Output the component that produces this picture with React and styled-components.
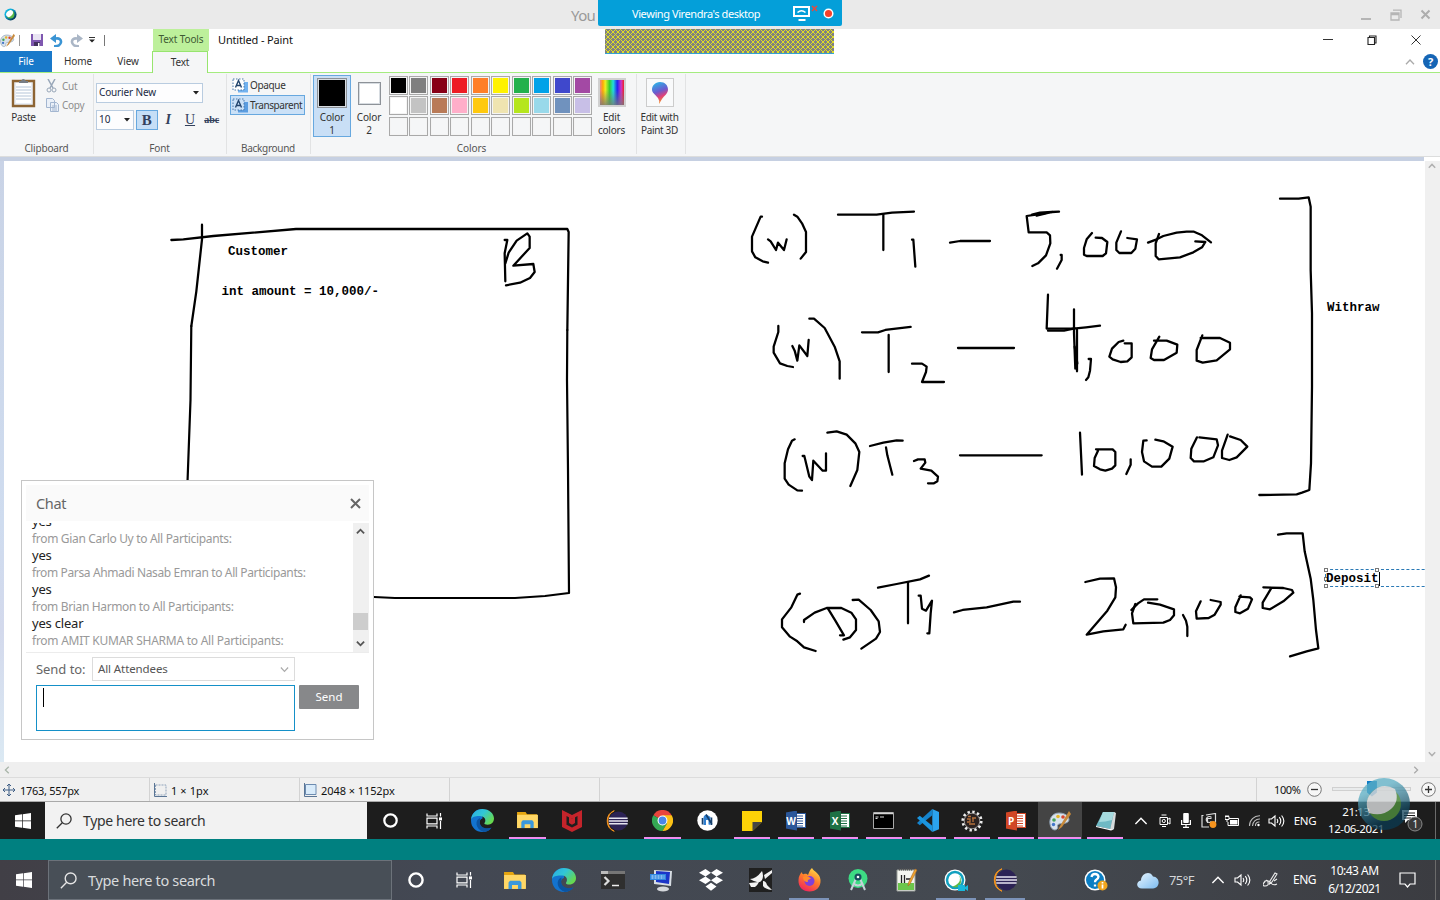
import React from 'react';
import styled, { createGlobalStyle, css } from 'styled-components';

const Global = createGlobalStyle`
  *{box-sizing:border-box}
  html,body{margin:0;padding:0;background:#fff;overflow:hidden}
  body{font-family:"Noto Sans","Open Sans",sans-serif;font-size:10px;color:#222}
  svg{display:block;flex:none}
`;

const T = styled.span`
  font-size:${p => p.$s || 10}px;
  letter-spacing:${p => p.$ls || 0}px;
  color:${p => p.$c || 'inherit'};
  line-height:${p => p.$lh || 13}px;
  white-space:pre;
  display:block;
`;
const Screen = styled.div`width:1440px;height:900px;display:flex;flex-direction:column;position:relative;overflow:hidden;`;

/* meeting window title bar */
const MeetingBar = styled.header`height:29px;flex:none;background:#eaeaea;display:flex;align-items:center;padding:0 9px 0 4px;`;
const MeetingTitle = styled.div`margin-left:554px;flex:1;`;
const MeetingButtons = styled.div`display:flex;gap:18px;align-items:center;`;
const SharePill = styled.div`position:absolute;left:598px;top:0;width:244px;height:26px;background:#049fd9;border-radius:0 0 2px 2px;display:flex;align-items:center;padding-left:34px;color:#fff;`;
const ShareIcons = styled.div`display:flex;align-items:center;gap:5px;margin-left:auto;padding-right:8px;`;
const Hatch = styled.div`position:absolute;left:605px;top:29px;width:229px;height:25px;background:#808080;border-bottom:1px solid #35a3cf;`;

/* paint chrome */
const TitleRow = styled.div`height:22px;flex:none;display:flex;align-items:center;background:#fff;`;
const QuickTools = styled.div`width:153px;display:flex;align-items:center;`;
const ToolsTab = styled.div`width:56px;height:22px;background:#bdf09b;display:flex;justify-content:center;align-items:center;padding-bottom:2px;`;
const DocTitle = styled.div`padding-left:9px;flex:1;`;
const WinButtons = styled.div`display:flex;align-items:center;gap:34px;padding-right:19px;`;
const TabRow = styled.div`height:22px;flex:none;display:flex;background:#fff;border-bottom:1px solid #a5ec80;position:relative;`;
const Tab = styled.div`width:${p => p.$w}px;height:21px;display:flex;align-items:center;justify-content:center;color:#333;
  ${p => p.$file && css`background:#1979ca;color:#fff;`}
  ${p => p.$on && css`background:#f5f6f7;border:1px solid #97e56e;border-bottom:0;height:22px;padding-bottom:1px;`}`;
const TabEnd = styled.div`flex:1;display:flex;justify-content:flex-end;align-items:center;gap:8px;padding-right:2px;`;
const Ribbon = styled.div`height:84px;flex:none;background:#f5f6f7;border-bottom:1px solid #dcdddd;display:flex;padding-top:1px;color:#333;`;
const Group = styled.section`width:${p => p.$w}px;height:80px;border-right:1px solid #e2e3e4;display:flex;flex-direction:column;`;
const GroupBody = styled.div`height:68px;flex:none;display:flex;padding:${p => p.$p || '0'};gap:${p => p.$gap || 0}px;${p => p.$col && 'flex-direction:column;'}`;
const GroupName = styled.div`display:flex;justify-content:center;color:#555;padding-right:${p => p.$pr ?? 1}px;`;
const Stack = styled.div`display:flex;flex-direction:column;align-items:${p => p.$left ? 'flex-start' : 'center'};gap:${p => p.$gap || 0}px;width:${p => p.$w ? p.$w + 'px' : 'auto'};padding-top:${p => p.$pt || 0}px;`;
const Line = styled.div`display:flex;align-items:center;gap:${p => p.$gap || 0}px;`;
const Combo = styled.div`width:${p => p.$w}px;height:20px;background:#fdfdfe;border:1px solid #b9cce0;display:flex;align-items:center;justify-content:space-between;padding:0 3px 1px 2px;color:#222a44;`;
const StyleBtn = styled.div`width:${p => p.$w || 21.5}px;height:20px;display:flex;align-items:center;justify-content:center;font:${p => p.$f};color:#33415c;
  border:1px solid ${p => p.$on ? '#67a8df' : 'transparent'};background:${p => p.$on ? '#c5def6' : 'none'};text-decoration:${p => p.$d || 'none'};text-decoration-thickness:1px;`;
const ModeBtn = styled.div`width:75px;height:20px;display:flex;align-items:center;gap:2px;padding-left:1px;border:1px solid ${p => p.$on ? '#67a8df' : 'transparent'};background:${p => p.$on ? '#cbe1f7' : 'none'};`;
const ColorBtn = styled.div`width:${p => p.$w}px;height:62px;display:flex;flex-direction:column;align-items:center;padding-top:2px;border:1px solid ${p => p.$on ? '#67a8df' : 'transparent'};background:${p => p.$on ? '#c9dff6' : 'none'};`;
const BigSwatch = styled.div`width:${p => p.$n}px;height:${p => p.$n}px;flex:none;margin:${p => p.$m}px 0 ${p => p.$m + 3}px;background:${p => p.$bg};border:1px solid #8d9298;box-shadow:inset 0 0 0 1px #d7dce1;`;
const Palette = styled.div`display:grid;grid-template-columns:repeat(10,19px);grid-auto-rows:19px;column-gap:1.44px;row-gap:1.3px;width:205px;`;
const Swatch = styled.div`background:${p => p.$c};border:1px solid #a9a9a9;box-shadow:inset 0 0 0 1px #f4f4f4;`;
const HelpDot = styled.div`width:15px;height:15px;border-radius:50%;background:#1565b5;color:#fff;font:bold 11px/15px "Open Sans",sans-serif;text-align:center;`;
const Spectrum = styled.div`width:28px;height:29px;flex:none;margin-bottom:4px;border:2px solid #d0d0d0;background:linear-gradient(transparent 40%,#777c),linear-gradient(90deg,#e88,#fa0 12%,#ee2 22%,#3c3 40%,#2dd 55%,#22e 72%,#c3c 88%,#e22);`;
const P3DFrame = styled.div`width:28px;height:29px;flex:none;margin-bottom:4px;border:1px solid #ccc;background:#f9fafb;display:flex;align-items:center;justify-content:center;`;

/* canvas */
const Band = styled.div`height:4px;flex:none;width:1424px;background:#c6d0e2;`;
const Work = styled.div`height:601px;flex:none;display:flex;`;
const LeftEdge = styled.div`width:4px;background:linear-gradient(#c9d3e6,#cfdcef 60%,#d3d9ec 78%,#dbe9f3);`;
const Canvas = styled.main`width:1421px;position:relative;overflow:hidden;background:#fff;`;
const Note = styled.div`position:absolute;left:${p => p.$x - 4}px;top:${p => p.$y - 160}px;font:bold 12.5px/14px "Liberation Mono",monospace;color:#000;white-space:pre;`;
const TextBox = styled.div`position:absolute;left:1321px;top:408px;width:120px;height:18px;border:1px dashed #2a79b5;`;
const Handle = styled.i`position:absolute;width:4px;height:4px;border:1px solid #777;background:#fff;left:${p => p.$x}px;top:${p => p.$y}px;`;
const NoteCaret = styled.div`position:absolute;left:1375px;top:411px;width:1px;height:14px;background:#000;`;
const VScroll = styled.div`width:15px;background:#f0f0f0;display:flex;flex-direction:column;justify-content:space-between;align-items:center;padding:1px 1px 4px 0;`;
const HScroll = styled.div`height:16px;flex:none;background:#efefef;border-bottom:1px solid #dcdcdc;display:flex;justify-content:space-between;align-items:center;padding:0 20px 0 3px;`;
const Status = styled.footer`height:24px;flex:none;background:#f0f0f0;border-bottom:1px solid #a9a9a9;display:flex;color:#111;`;
const StatusCell = styled.div`width:${p => p.$w}px;${p => p.$w ? '' : 'flex:1;'}border-right:1px solid #d3d3d3;display:flex;align-items:center;gap:4px;padding-left:${p => p.$pl || 2}px;padding-top:1px;`;
const ZoomBox = styled.div`width:183px;display:flex;align-items:center;padding-left:17px;`;
const ZoomTrack = styled.div`width:79px;height:4px;border:1px solid #d0d0d0;background:#e9ebec;margin:0 10px 2px;display:flex;align-items:center;justify-content:center;`;
const ZoomThumb = styled.div`width:10px;height:16px;flex:none;background:#0f7cc5;clip-path:polygon(0 0,100% 0,100% 75%,50% 100%,0 75%);`;

/* taskbars */
const Taskbar = styled.nav`height:${p => p.$h}px;flex:none;background:${p => p.$bg};display:flex;align-items:stretch;color:#fff;`;
const Teal = styled.div`height:21px;flex:none;background:#008080;`;
const Slot = styled.div`width:${p => p.$w}px;flex:none;display:flex;align-items:center;justify-content:center;position:relative;text-align:center;padding-bottom:${p => p.$pb || 0}px;
  ${p => p.$on && 'background:#444;'}
  ${p => p.$u && css`&::after{content:'';position:absolute;bottom:0;left:50%;width:${p.$u}px;margin-left:${-p.$u / 2}px;height:2px;background:${p.$uc || '#f08cf0'};}`}`;
const Gap = styled.div`width:${p => p.$w}px;flex:none;`;
const Search = styled.div`width:${p => p.$w}px;flex:none;display:flex;align-items:center;gap:11px;padding-left:11px;
  background:${p => p.$dark ? '#484f57' : '#f2f2f2'};color:${p => p.$dark ? '#d9dbdd' : '#333'};${p => p.$dark && 'border:1px solid #6c727a;'}`;
const EdgeLine = styled.div`width:1px;background:#6b6b6b;`;
const Floating = styled.div`position:absolute;left:1358px;top:778px;opacity:.84;`;
const OfficeBox = styled.div`width:20px;height:19px;display:flex;align-items:center;flex-direction:row-reverse;`;
const OfficePage = styled.div`width:9px;height:15px;background:#fff;border:1px solid ${p => p.$c};border-left:0;display:flex;align-items:center;`;
const OfficeTab = styled.div`width:12px;height:20px;background:${p => p.$c};color:#fff;font:bold 10px/20px "Open Sans",sans-serif;clip-path:polygon(0 10%,100% 0,100% 100%,0 90%);`;
const Badge = styled.text`font:10px "Open Sans",sans-serif;fill:#fff;`;

/* chat */
const ChatBox = styled.aside`position:absolute;left:21px;top:480px;width:353px;height:260px;background:#fff;border:1px solid #c6c6c6;padding:4px;display:flex;flex-direction:column;`;
const ChatHead = styled.div`height:36px;background:#fafafa;display:flex;align-items:center;justify-content:space-between;padding:0 8.5px 0 10px;`;
const ChatLog = styled.div`height:130px;margin-top:2px;width:343px;display:flex;overflow:hidden;border-bottom:1px solid #ececec;`;
const Messages = styled.div`flex:1;margin-top:-10px;padding-left:6px;`;
const Bar = styled.div`width:16px;height:129px;background:#f0f0f0;display:flex;flex-direction:column;align-items:center;padding:4px 1px 0 0;`;
const Thumb = styled.div`width:15px;height:17px;flex:none;background:#cdcdcd;margin:77px 0 9px;`;
const SendRow = styled.div`display:flex;align-items:center;padding:4px 0 0 10px;`;
const SendLabel = styled.div`width:56px;`;
const Select = styled.div`width:203px;height:24px;border:1px solid #dcdcdc;display:flex;align-items:center;justify-content:space-between;padding:0 5px;`;
const ComposeRow = styled.div`display:flex;gap:4px;padding:4px 0 0 10px;`;
const Compose = styled.div`width:259px;height:46px;border:1px solid #1590c8;padding:2px 6px;`;
const Caret = styled.div`width:1px;height:19px;background:#000;`;
const SendBtn = styled.div`width:60px;height:24px;background:#87888a;border-radius:1px;color:#fff;display:flex;align-items:center;justify-content:center;padding-bottom:1px;`;

const Svg = ({ w, h = w, vb, children, ...r }) => <svg width={w} height={h} viewBox={vb || `0 0 ${w} ${h}`} fill="none" {...r}>{children}</svg>;
const Chev = ({ dir = 'up', w = 10, c = '#999', sw = 1.3 }) => {
  const a = { up: 0, right: 90, down: 180, left: 270 }[dir];
  return <Svg w={w} vb="0 0 10 10"><path d="M1 7.2 5 3l4 4.2" stroke={c} strokeWidth={sw} transform={`rotate(${a} 5 5)`} /></Svg>;
};
const Tri = () => <Svg w={6} h={4}><path d="M0 0h6L3 3.6z" fill="#222" /></Svg>;
const Webex = ({ s = 14, id = 'wx' }) => (
  <Svg w={s} vb="0 0 14 14">
    <defs><linearGradient id={id} x1="0" y1="0" x2="1" y2="1"><stop offset=".3" stopColor="#10b3e0" /><stop offset=".8" stopColor="#053e5e" /></linearGradient></defs>
    <circle cx="7" cy="7" r="6.500" fill={`url(#${id})`} /><circle cx="7" cy="7" r="4.200" fill="#5cb947" /><ellipse cx="6" cy="6" rx="4.200" ry="3" fill="#fff" transform="rotate(-45 6 6)" />
  </Svg>
);
const Win = ({ s }) => <Svg w={s} vb="0 0 16 16"><path d="M0 2.3 7 1.3v6.3H0zM7.7 1.2 16 0v7.6H7.7zM0 8.3h7v6.4l-7-1zM7.7 8.3H16V16l-8.3-1.2z" fill="#fff" /></Svg>;
const Mag = ({ c, s = 16 }) => <Svg w={s} vb="0 0 16 16"><circle cx="10" cy="6" r="5.1" stroke={c} strokeWidth="1.3" /><path d="M6.3 9.7.8 15.3" stroke={c} strokeWidth="1.3" /></Svg>;
const Ring = ({ s = 15 }) => <Svg w={s} vb="0 0 16 16"><circle cx="8" cy="8" r="6.6" stroke="#fff" strokeWidth="2.4" /></Svg>;
const TaskView = () => <Svg w={17} h={16}><path d="M1 .5v2.5h10V.5M1 15.5V13h10v2.5M1 5.2h10v5.6H1zM14.5 0v3.5M14.5 8v8" stroke="#fff" strokeWidth="1.2" /><path d="M13 4.4h3v3h-3z" fill="#fff" /></Svg>;
const Edge = ({ s = 24, id }) => (
  <Svg w={s} vb="0 0 24 24">
    <defs><linearGradient id={id} x1="0" y1="0" x2="1" y2=".6"><stop offset="0" stopColor="#2aa9e0" /><stop offset=".5" stopColor="#31c6d8" /><stop offset="1" stopColor="#67d94f" /></linearGradient></defs>
    <path d="M12 0C5 0 0 5 0 12s5 12 12 12c4 0 7-1.800 9-4.500-6 3-12 0-12-5.500 0-2 1-3.500 3-4z" fill="#1373cf" />
    <path d="M0 11C1 4 6 0 12 0c7 0 12 4.700 12 10 0 4-3 6.500-6.500 6.500-2.500 0-4-.8-3.500-1.800 2-2.500 1-6.700-3.500-7.200C6 7 1 8 0 11z" fill={`url(#${id})`} />
    <path d="M9.500 9.500C4 11 4 21 13 23.900c4 0 7-2 8.500-4.600-5 2.200-12 .2-12.300-5.300 0-2 .5-3.300.300-4.500z" fill="#0c54a0" />
  </Svg>
);
const Folder = ({ s = 22 }) => <Svg w={s} h={s * 0.86} vb="0 0 22 19"><path d="M0 1h9l1.500 2.500H21V18H0z" fill="#e5a50f" /><path d="M0 4h22v14H0z" fill="#ffd766" /><path d="M4.500 18v-6.500l1.500-1.800h10l1.500 1.800V18H14v-4H8v4z" fill="#3a98dc" /></Svg>;
const McAfee = () => <Svg w={20} h={22}><path d="M0 0 10 5 20 0v17l-10 5L0 17z" fill="#c4242b" /><path d="M4.500 6 10 9l5.500-3v8.800L10 17.500l-5.500-2.700z" fill="#1e1e1e" /><path d="M7 5.500 10 9l3-3.500v7.500l-3 1.700-3-1.700z" fill="#c4242b" /></Svg>;
const Eclipse = ({ s = 22 }) => <Svg w={s} vb="0 0 24 24"><path d="M9 .8A12 12 0 0 0 9 23.200 12.500 12.500 0 0 1 9 .8z" fill="#f7941e" stroke="#f7941e" /><circle cx="13.500" cy="12" r="10.400" fill="#2c2255" /><path d="M3.300 9h20.300M3 12h21M3.300 15h20.300" stroke="#e6e4f0" strokeWidth="1.700" /></Svg>;
const Chrome = () => <Svg w={21} vb="0 0 20 20"><path d="M10 10 1.300 5A10 10 0 0 1 18.700 5z" fill="#e8453c" /><path d="M10 10 1.300 5A10 10 0 0 0 10 20l4.400-7.500z" fill="#34a853" /><path d="M10 5h8.700A10 10 0 0 1 10 20l4.400-7.500z" fill="#fbc116" /><circle cx="10" cy="10" r="4.700" fill="#fff" /><circle cx="10" cy="10" r="3.700" fill="#4a86e8" /></Svg>;
const StudioRound = () => <Svg w={21}><circle cx="10.500" cy="10.500" r="10.200" fill="#fff" /><path d="M6.500 15V8q0-3 3-3.500l4 2.500v8l-2-.5V10h-2.500v5z" fill="#2f7fd0" /><path d="M5.500 8v6.500M14.500 7.500V15M9 4.500l6 10" stroke="#163f6b" strokeWidth="1.600" /></Svg>;
const Sticky = () => <Svg w={20}><path d="M0 0h20v20H0z" fill="#fdd207" /><path d="M10.500 11H20l-9.500 9z" fill="#454545" /><path d="M20 11v9h-9.500z" fill="#1d1d1d" /></Svg>;
const Office = ({ c, k }) => <OfficeBox><OfficePage $c={c}><Svg w={7} h={13}><path d="M0 2h6M0 4.500h6M0 7h6M0 9.500h6M0 12h6" stroke={c} /></Svg></OfficePage><OfficeTab $c={c}>{k}</OfficeTab></OfficeBox>;
const Cmd = () => <Svg w={21} h={17}><path d="M.5.5h20v16H.5z" fill="#000" stroke="#a9a9a9" /><path d="M1 1.500h19" stroke="#d5d5d5" strokeWidth="1.500" /><path d="M2.500 5h3M7 5h4M2.500 6.500h2" stroke="#ddd" /></Svg>;
const VSCode = () => <Svg w={23} vb="0 0 24 24"><path d="M17 0 24 3v18l-7 3z" fill="#2ba3ee" /><path d="M17 0v6.500L4 17l-3-2.500z" fill="#1583cc" /><path d="M17 24v-6.500L4 7 1 9.500z" fill="#1b95df" /></Svg>;
const Gear = () => <Svg w={22}><circle cx="11" cy="11" r="9.300" stroke="#eee" strokeWidth="2.600" strokeDasharray="2.400 2.470" /><circle cx="11" cy="11" r="7.800" fill="#2b2220" stroke="#ccc" strokeWidth=".7" /><path d="M6 9h3v3H6M11 8h4M12 8v4M8 14h6M7 6.500h3" stroke="#b5713c" strokeWidth="1.300" /></Svg>;
const PaintIcon = ({ s = 22 }) => <Svg w={s} vb="0 0 22 22"><path d="M10 3C3 3 0 9 1 14c1 6 5 7 7 5 2-1.500-1-4 2-5 4-1 9 0 10-4 0-4-4-7-10-7z" fill="#d8e2ec" stroke="#8fa1b3" /><circle cx="5" cy="10" r="1.800" fill="#45a35a" /><circle cx="9" cy="6.500" r="1.800" fill="#e3b52a" /><circle cx="14" cy="7" r="1.800" fill="#d8452e" /><circle cx="4.500" cy="14.500" r="1.700" fill="#4176c9" /><path d="M20 1 11 16l-2 4 4-3 9-13z" fill="#c78a3c" /></Svg>;
const Notebook = () => <Svg w={21} h={20}><path d="M8 1h12l-2 18-14-4z" fill="#5c8f9b" /><path d="M8 1h11l-4 17L1 15z" fill="#6fb9c4" /><path d="M8 1h11l-2 8q-7 2-13 2z" fill="#a5dade" /><path d="m19 1 2 1-2 16-4 1z" fill="#d5dadb" /><path d="m1 15 14 3 4 .5-3 1L1 16z" fill="#fff" /></Svg>;
const Speaker = () => <Svg w={17} h={14}><path d="M1 5h2.500L7 2v10L3.500 9H1zM9 5q1.500 2 0 4M11.300 3.200q3 3.800 0 7.600M13.600 1.500q4.500 5.500 0 11" stroke="#fff" strokeWidth="1.100" /></Svg>;

const strokes = [
  [160, 210, ['M34 90L70 88 160 78 408 57H1222L1226 66 1222 360', 'M126 44V88L109 244 94 348', 'M1034 90H1042L1034 130 1036 214', 'M1036 160L1046 128 1070 92 1102 70 1109 80V114L1060 167 1120 162 1124 186 1110 204 1080 218 1038 226']],
  [740, 180, ['M66 110H62L36 170V214L46 232 68 244 84 248', 'M84 178L92 184 108 210 114 188 132 210 140 178', 'M162 104L172 110 186 130 198 156V216L182 236', 'M294 104H410L456 98 522 95', 'M430 104V210', 'M516 179H520L526 260', 'M630 188L660 183H750', 'M115 438V456L101 500V518L120 550 142 558 159 561', 'M157 498L164 512 172 542 178 496 202 528 206 480', 'M208 416H222L254 444 284 500 299 544V596', 'M366 457H414L436 450 512 441', 'M446 465V576', 'M516 551H546L560 560 558 576 546 606H612', 'M654 504H822']],
  [1020, 180, ['M117 95L96 96 48 104 20 108 26 157H80L90 166 91 190 78 226 54 250 37 258', 'M36 104L60 98 96 96 50 107', 'M122 225H125V240L111 266', 'M216 159L200 178 192 204V224L200 228H248L258 220 262 186 246 174 227 173', 'M303 154L289 188V210L298 219H334L346 206 351 178 322 174', 'M384 188L410 178 430 168 470 158 500 155H522L546 166 573 187', 'M417 162L407 190V228L416 238 480 232 520 217 546 202 556 186 526 184', 'M84 344L80 446H160L198 442 240 437', 'M84 452H132L164 445', 'M162 388V460L166 566', 'M171 450V574', 'M164 500L172 550', 'M206 537H213L210 572 205 592 198 600', 'M310 482L296 486 276 506 268 530 278 538 302 546 322 544 335 532V490H314', 'M418 470L396 508 392 534 402 540H432L470 518 472 494 440 482H402', 'M547 466L530 510V542L548 548 590 541 630 508V488L600 474H542', 'M180 758L186 884', 'M228 808H278L286 816V856L276 866 256 872 240 868 222 858 224 834 234 812', 'M332 838V854L319 882', 'M380 781L370 782 366 816 372 844 396 860H424L448 836 458 800 430 784 406 779', 'M531 772L514 806 512 834 522 844H552L580 832 594 796 590 778 538 772', 'M623 764L606 812V834L628 840 650 832 682 800 662 780 630 769', 'M-180 826H65', 'M780 56H836L866 52 872 80V270L876 400V620L873 850 868 930 846 938 830 943 718 945']],
  [740, 400, ['M164 118L156 122 144 148 134 190V236L146 254 172 271 186 272', 'M188 168H193L208 230 216 240 220 182 248 212H258V160', 'M262 98L290 94 320 104 346 130 358 156 352 210 331 258', 'M390 138L430 128 470 121 488 122', 'M438 142L442 166 457 224', 'M522 183L534 178H554L556 188 542 206 574 212 594 230 592 244 582 250H564', 'M180 581L172 584 154 622 126 658V682L150 710 172 724 192 742 227 753', 'M192 666V660L224 638 260 624H304L334 638 348 658V690L330 712 310 719', 'M264 626L286 662 312 706H300', 'M338 600L356 599 392 630 416 664 420 696 408 716 364 746', 'M414 563L470 552 540 538 567 527', 'M504 547V670', 'M536 587H542L546 626 558 632 576 602 572 640 568 700H562', 'M642 637L668 630 740 622 820 605H840']],
  [1020, 500, ['M196 246L240 236 282 235 288 262 286 292 262 332 200 404 250 394 310 388 317 374', 'M384 308L420 314 462 328V346L450 360 430 368 340 370 336 340 346 312', 'M334 330L354 310 372 298H412', 'M489 345L498 362 502 380V408', 'M542 304L528 334 530 356 566 354 584 344 602 314V306L572 300', 'M662 286L646 322V336L660 340 684 326 696 298 690 292 658 290', 'M753 266L728 308V324L750 328 790 304 820 278 816 270 790 264 730 262', 'M774 104L800 100H848L854 154 872 236 880 300 888 390 895 445 860 454 810 469']],
];

const palette = ['#000', '#7f7f7f', '#880015', '#ed1c24', '#ff7f27', '#fff200', '#22b14c', '#00a2e8', '#3f48cc', '#a349a4', '#fff', '#c3c3c3', '#b97a57', '#ffaec9', '#ffc90e', '#efe4b0', '#b5e61d', '#99d9ea', '#7092be', '#c8bfe7', ...Array(10).fill('#f5f6f7')];
const messages = [['yes'], ['from Gian Carlo Uy to All Participants:', 1, -0.32], ['yes'], ['from Parsa Ahmadi Nasab Emran to All Participants:', 1, -0.37], ['yes'], ['from Brian Harmon to All Participants:', 1, -0.35], ['yes clear'], ['from AMIT KUMAR SHARMA to All Participants:', 1, -0.25]];

const ModeIcon = ({ on }) => <Svg w={16} h={15}><path d="M6 4h10v10.500H6z" fill={on ? '#5b9de0' : '#72b2ef'} /><path d="M1 1h11v11H1z" fill={on ? '#cbe1f7' : '#fff'} stroke="#4a78ab" strokeDasharray="1.500 1.500" /><path d="m3.500 9.500 3-7 3 7M4.500 7.500h4" stroke="#24466e" strokeWidth="1.400" /></Svg>;

export default function App() {
  return (
    <>
      <Global />
      <Screen>
        <MeetingBar>
          <Webex s={13} id="wxa" />
          <MeetingTitle><T $s={15} $c="#999" $lh={20} $ls={-0.6}>You</T></MeetingTitle>
          <MeetingButtons>
            <Svg w={12}><path d="M1 10h10" stroke="#b5b5b5" strokeWidth="2" /></Svg>
            <Svg w={12}><path d="M1 4h8v7H1zM1 5.500h8M3 1.200h8V9" stroke="#b5b5b5" strokeWidth="1.300" /></Svg>
            <Svg w={11}><path d="m1.500 1.500 8 8m0-8-8 8" stroke="#adadad" strokeWidth="2" /></Svg>
          </MeetingButtons>
        </MeetingBar>
        <TitleRow>
          <QuickTools>
            <PaintIcon s={15} /><Gap $w={4} /><Svg w={1} h={11}><path d="M.5 0v11" stroke="#999" /></Svg><Gap $w={11} />
            <Svg w={12}><path d="M0 0h12v12H0z" fill="#7f57b0" /><path d="M2 0h8v6H2z" fill="#e9e4f3" /><path d="M3 8h6v4H3z" fill="#43325f" /><path d="M7 9h1.500v3H7z" fill="#fff" /></Svg><Gap $w={7} />
            <Svg w={13}><path d="M4 12.200c9 .5 9-8.700 2-7.700H3" stroke="#3a94d4" strokeWidth="2.600" /><path d="M6 0v9L0 4.500z" fill="#3a94d4" /></Svg><Gap $w={7} />
            <Svg w={13}><path d="M9 12.200c-9 .5-9-8.700-2-7.700h3" stroke="#aab6c6" strokeWidth="2.600" /><path d="M7 0v9l6-4.500z" fill="#aab6c6" /></Svg><Gap $w={6} />
            <Svg w={6} h={6}><path d="M0 .5h6" stroke="#333" /><path d="M0 2.500h6L3 5.500z" fill="#222" /></Svg><Gap $w={9} /><Svg w={1} h={11}><path d="M.5 0v11" stroke="#777" /></Svg>
          </QuickTools>
          <ToolsTab><T $ls={-0.12} $c="#3f5a33" $lh={15}>Text Tools</T></ToolsTab>
          <DocTitle><T $s={11} $c="#111" $lh={14} $ls={-0.15}>Untitled - Paint</T></DocTitle>
          <WinButtons>
            <Svg w={10}><path d="M0 4.500h10" stroke="#333" /></Svg>
            <Svg w={10}><path d="M1 2.500h6.500V9.500H1zM2.500 2.500v-1.500H9V8H7.500" stroke="#222" strokeWidth="1.100" /></Svg>
            <Svg w={10}><path d="m.5.5 9 9m0-9-9 9" stroke="#333" /></Svg>
          </WinButtons>
        </TitleRow>
        <TabRow>
          <Tab $w={52} $file><T $ls={-0.15}>File</T></Tab>
          <Tab $w={52}><T $ls={-0.15}>Home</T></Tab>
          <Tab $w={48}><T $ls={-0.15}>View</T></Tab>
          <Tab $w={56} $on><T $ls={-0.15}>Text</T></Tab>
          <TabEnd><Chev w={10} c="#aaa" /><HelpDot>?</HelpDot></TabEnd>
        </TabRow>
        <Ribbon>
          <Group $w={94}>
            <GroupBody $p="4px 0 0 11px" $gap={10}>
              <Stack $w={25} $gap={3}>
                <Svg w={25} h={30}><path d="M2 3h21v25H2z" fill="#e9eef5" stroke="#8d6433" strokeWidth="2.400" /><path d="M5 5h15v20H5z" fill="#fff" /><path d="M5 9h15M5 12h15M5 15h15M5 18h15M5 21h15" stroke="#b5c5d8" /><path d="M8 5V3h2q2-4 5 0h2v2z" fill="#777d85" /></Svg>
                <T $ls={-0.25}>Paste</T>
              </Stack>
              <Stack $left $gap={5} $pt={1}>
                <Line $gap={5}><Svg w={11} h={14}><path d="m2 0 5 9M9 0 4 9" stroke="#97a6b8" strokeWidth="1.500" /><circle cx="3" cy="11" r="2" stroke="#97a6b8" /><circle cx="8" cy="11" r="2" stroke="#97a6b8" /></Svg><T $c="#8d8d8d" $ls={-0.3}>Cut</T></Line>
                <Line $gap={3}><Svg w={13} h={14}><path d="M.5.5h6l2 2v7h-8zM4.500 4.500h6l2 2v7h-8z" fill="#eaf0f8" stroke="#a3b6d0" /><path d="M6 8h5M6 10h5M6 12h5" stroke="#a3b6d0" /></Svg><T $c="#8d8d8d" $ls={-0.25}>Copy</T></Line>
              </Stack>
            </GroupBody>
            <GroupName $pr={0}><T $ls={-0.15}>Clipboard</T></GroupName>
          </Group>
          <Group $w={133}>
            <GroupBody $p="9px 0 0 2px" $gap={7} $col>
              <Combo $w={107}><T $ls={-0.15}>Courier New</T><Tri /></Combo>
              <Line>
                <Combo $w={38}><T>10</T><Tri /></Combo><Gap $w={2} />
                <StyleBtn $on $f='bold 15px/18px "Liberation Serif",serif'>B</StyleBtn>
                <StyleBtn $w={21.5} $f='italic bold 14px/18px "Liberation Serif",serif'>I</StyleBtn>
                <StyleBtn $w={22} $f='14px/18px "Liberation Serif",serif' $d="underline">U</StyleBtn>
                <StyleBtn $f='bold 10px/18px "Liberation Serif",serif' $d="line-through">abc</StyleBtn>
              </Line>
            </GroupBody>
            <GroupName><T $ls={-0.15}>Font</T></GroupName>
          </Group>
          <Group $w={84}>
            <GroupBody $p="1px 0 0 3px" $col>
              <ModeBtn><ModeIcon /><T $ls={-0.35}>Opaque</T></ModeBtn>
              <ModeBtn $on><ModeIcon on /><T $ls={-0.4}>Transparent</T></ModeBtn>
            </GroupBody>
            <GroupName><T $ls={-0.3}>Background</T></GroupName>
          </Group>
          <Group $w={326}>
            <GroupBody $p="1px 0 0 2px">
              <ColorBtn $w={38} $on><BigSwatch $n={30} $m={0} $bg="#000" /><T $ls={-0.15}>Color</T><T>1</T></ColorBtn>
              <ColorBtn $w={36}><BigSwatch $n={23} $m={3.5} $bg="#fff" /><T $ls={-0.15}>Color</T><T>2</T></ColorBtn>
              <Gap $w={2} />
              <Stack $pt={1} $left>
                <Palette>{palette.map((c, i) => <Swatch key={i} $c={c} />)}</Palette>
              </Stack>
              <Stack $pt={3} $w={35}>
                <Spectrum />
                <T $ls={-0.2}>Edit</T><T $ls={-0.2}>colors</T>
              </Stack>
            </GroupBody>
            <GroupName $pr={4}><T $ls={-0.1}>Colors</T></GroupName>
          </Group>
          <Group $w={49}>
            <Stack $pt={4} $w={45}>
              <P3DFrame>
                <Svg w={20} h={24}>
                  <defs><linearGradient id="p3" x1=".2" y1="0" x2=".5" y2="1"><stop offset="0" stopColor="#28b8e8" /><stop offset=".45" stopColor="#6a5bd0" /><stop offset=".7" stopColor="#e0417a" /><stop offset="1" stopColor="#f3a020" /></linearGradient></defs>
                  <path d="M10 1c5 0 8 3.500 8 7.500S14 15 12 18l-3 5q1-3-1-6C5 13 2 12 2 8.500S5 1 10 1z" fill="url(#p3)" />
                </Svg>
              </P3DFrame>
              <T $ls={-0.3}>Edit with</T><T $ls={-0.35}>Paint 3D</T>
            </Stack>
          </Group>
        </Ribbon>
        <Band />
        <Work>
          <LeftEdge />
          <Canvas>
            <Svg w={1421} h={601} vb="4 161 1421 601" stroke="#000" strokeLinejoin="round" strokeLinecap="round">
              {strokes.map(([x, y, list]) => (
                <g key={x + '-' + y} transform={`translate(${x} ${y}) scale(.33333)`} strokeWidth="6.800">
                  {list.map(d => <path key={d} d={d} />)}
                </g>
              ))}
              <path d="M567.300 330 567 380 568 470 569 593 545 596 515 598H395L374 597M191.300 326 190.500 400 187.500 482" strokeWidth="2.200" />
            </Svg>
            <Note $x={228} $y={244}>Customer</Note>
            <Note $x={221.5} $y={284}>int amount = 10,000/-</Note>
            <Note $x={1327} $y={300}>Withraw</Note>
            <TextBox>
              <Handle $x={-2} $y={-2} /><Handle $x={49} $y={-2} /><Handle $x={-2} $y={7} /><Handle $x={-2} $y={14} /><Handle $x={49} $y={14} />
            </TextBox>
            <Note $x={1326} $y={571}>Deposit</Note>
            <NoteCaret />
          </Canvas>
          <VScroll><Chev w={8} sw={1.8} c="#b0b0b0" /><Chev w={8} sw={1.8} c="#b0b0b0" dir="down" /></VScroll>
        </Work>
        <HScroll><Chev w={8} sw={1.6} c="#a9b5a9" dir="left" /><Chev w={8} sw={1.6} c="#a9a9a9" dir="right" /></HScroll>
        <Status>
          <StatusCell $w={150}><Svg w={14}><path d="M7 1v12M1 7h12M5 3l2-2 2 2M5 11l2 2 2-2M3 5 1 7l2 2M11 5l2 2-2 2" stroke="#3f5f86" /></Svg><T $s={11} $ls={-0.3}>1763, 557px</T></StatusCell>
          <StatusCell $w={150} $pl={3}><Svg w={14}><path d="M2.500 2h10.500v10H2.500z" stroke="#8fa3bb" strokeDasharray="2 1" /><path d="M1.500 0v13.500H14" stroke="#5a7595" /></Svg><T $s={11} $ls={0.1}>1 × 1px</T></StatusCell>
          <StatusCell $w={150} $pl={3}><Svg w={14}><path d="M2.500 1.500h10.500v10H2.500z" fill="#d9ebfa" stroke="#6c8bb0" /><path d="M1.500 0v13.500H14" stroke="#5a7595" /></Svg><T $s={11} $ls={-0.07}>2048 × 1152px</T></StatusCell>
          <StatusCell $w={150} /><StatusCell />
          <ZoomBox><T $s={11} $ls={-0.4}>100%</T><Gap $w={7} />
            <Svg w={15}><circle cx="7.500" cy="7.500" r="6.800" fill="#f7f7f7" stroke="#777" /><path d="M4 7.500h7" stroke="#333" strokeWidth="1.300" /></Svg>
            <ZoomTrack><ZoomThumb /></ZoomTrack>
            <Svg w={15}><circle cx="7.500" cy="7.500" r="6.800" fill="#f7f7f7" stroke="#777" /><path d="M4 7.500h7M7.500 4v7" stroke="#333" strokeWidth="1.300" /></Svg>
          </ZoomBox>
        </Status>
        <Taskbar $h={37} $bg="#1d1d1d">
          <Slot $w={45}><Win s={16} /></Slot>
          <Search $w={322}><Mag c="#333" /><T $s={14} $lh={20} $ls={-0.34}>Type here to search</T></Search>
          <Gap $w={1} />
          <Slot $w={44}><Ring /></Slot><Slot $w={44}><TaskView /></Slot><Gap $w={3.5} />
          <Slot $w={45}><Edge s={23} id="ea" /></Slot>
          <Slot $w={45} $u={37}><Folder s={21} /></Slot>
          <Slot $w={45}><McAfee /></Slot>
          <Slot $w={45}><Eclipse /></Slot>
          <Slot $w={45} $u={37}><Chrome /></Slot>
          <Slot $w={45}><StudioRound /></Slot>
          <Slot $w={44} $u={36}><Sticky /></Slot>
          <Slot $w={44} $u={36}><Office c="#2b579a" k="W" /></Slot>
          <Slot $w={44} $u={36}><Office c="#1e7145" k="X" /></Slot>
          <Slot $w={44} $u={36}><Cmd /></Slot>
          <Slot $w={44} $u={36}><VSCode /></Slot>
          <Slot $w={44} $u={36}><Gear /></Slot>
          <Slot $w={44} $u={36}><Office c="#d24726" k="P" /></Slot>
          <Slot $w={44} $u={43} $on><PaintIcon /></Slot>
          <Slot $w={47} $u={36}><Notebook /></Slot>
          <Slot $w={25}><Chev w={14} c="#fff" sw={1} /></Slot>
          <Slot $w={23}><Svg w={12} h={13}><path d="M1 3.500h7.500v7H1zM8.500 5.500 11 4v6l-2.500-1.500M2.500 1h5M3 12.500h4" stroke="#fff" /><circle cx="4.800" cy="7" r="1.600" stroke="#fff" /></Svg></Slot>
          <Slot $w={19}><Svg w={10} h={15}><rect x="2.200" y="0" width="5.600" height="10" rx="1" fill="#fff" /><path d="M.6 7v4.500h8.800V7M5 11v3M2 14.400h6" stroke="#fff" strokeWidth="1.200" /></Svg></Slot>
          <Slot $w={27}><Svg w={16} h={15}><path d="M8 14H1V2.500h1.500M5 2 14.500.5v9M6.500 10V5.500h4" stroke="#ddd" strokeWidth="1.200" /><path d="M10.500 4.500a3 3 0 1 0 0 4" stroke="#ddd" strokeWidth="1.200" /><circle cx="12" cy="11.500" r="3.400" fill="#f7941e" /></Svg></Slot>
          <Slot $w={19}><Svg w={15} h={12}><path d="M4 3.500h9.500v7H3V7" stroke="#fff" /><path d="M5 5h7.500v4.500H5z" fill="#fff" /><path d="M0 1.500h4v3H0zM1 0v2M3 0v2M2 4v3" stroke="#fff" /></Svg></Slot>
          <Slot $w={25}><Svg w={13}><circle cx="10.500" cy="11" r="1.200" fill="#fff" /><path d="M7.500 12a3.500 3.500 0 0 1 4-4M4.500 12A7 7 0 0 1 12 5M1.500 12A10 10 0 0 1 12 1.800" stroke="#bbb" strokeWidth="1.100" /></Svg></Slot>
          <Slot $w={19}><Speaker /></Slot>
          <Slot $w={39} $pb={1}><T $s={11.5} $ls={-0.4}>ENG</T></Slot>
          <Slot $w={63} $pb={2}><div><T $s={11.5} $lh={17} $ls={-0.4}>21:13</T><T $s={11.5} $lh={17} $ls={-0.4}>12-06-2021</T></div></Slot>
          <Slot $w={47}><Svg w={24} h={25}><path d="M3 2h15v10H9l-3 3v-3H3z" fill="#fff" /><path d="M5 5h11M5 7.500h11M5 10h7" stroke="#1d1d1d" /><circle cx="16" cy="16" r="7" fill="#3a3a3a" stroke="#888" /><Badge x="13.500" y="20">1</Badge></Svg></Slot>
          <EdgeLine />
        </Taskbar>
        <Teal />
        <Taskbar $h={40} $bg="linear-gradient(90deg,#413f46,#434853 30%,#444950 70%,#3b3c41)">
          <Slot $w={48}><Win s={16} /></Slot>
          <Search $w={344} $dark><Mag c="#e5e5e5" s={17} /><T $s={14.5} $lh={20} $ls={-0.33}>Type here to search</T></Search>
          <Slot $w={48}><Ring s={16} /></Slot><Slot $w={48}><TaskView /></Slot><Gap $w={2.5} />
          <Slot $w={49}><Folder s={22} /></Slot>
          <Slot $w={49}><Edge s={24} id="eb" /></Slot>
          <Slot $w={49}><Svg w={24} h={18}><path d="M0 0h24v18H0z" fill="#2f2f2f" /><path d="M0 0h24v3H0z" fill="#767676" /><path d="M0 0h7v3H0z" fill="#bbb" /><path d="m3.500 6 4 4-4 4" stroke="#ddd" strokeWidth="2.200" /><path d="M11 14.500h7" stroke="#eee" strokeWidth="1.500" /></Svg></Slot>
          <Slot $w={49}><Svg w={24} h={23}><path d="m4 1 18 1-1 15-17-2z" fill="#d7dde3" /><path d="m6 2 14 1-1 12-13-2z" fill="#1b35c8" /><path d="M0 5h16v6H0z" fill="#2f86e0" /><path d="M1.500 7h13M1.500 9h13" stroke="#d7ecff" strokeDasharray="2 1" /><ellipse cx="13" cy="20" rx="6" ry="2.600" fill="#d5d8dc" /></Svg></Slot>
          <Slot $w={49}><Svg w={24} h={22}><path d="m6.500 0 5.500 3.800-5.500 3.700L0 3.800zM17.500 0 24 3.800l-6.500 3.700L12 3.800zM0 11.300l6.500-3.800 5.500 3.800L6.500 15zM24 11.300l-6.500-3.800-5.500 3.800 5.500 3.700zM6.500 17.500 12 13.700l5.500 3.800L12 21.700z" fill="#fff" /></Svg></Slot>
          <Slot $w={49}><Svg w={23} h={24}><path d="M0 0h23v24H0z" fill="#202020" /><path d="M1 11q6 0 12-8 2 5 0 9-2 3-5 2-4-1-7-3zM15 7l8-5v3l-7 6zM0 15l10-1q-2 4-4 5H2zM14 13q3 0 4 4l5 5q-7-1-9-4z" fill="#f2f2f2" /></Svg></Slot>
          <Slot $w={49} $u={40} $uc="#7c93b8"><Svg w={23} h={24}><defs><linearGradient id="ff" x1=".8" y1="0" x2=".3" y2="1"><stop offset="0" stopColor="#ffe14a" /><stop offset=".5" stopColor="#ff7a2b" /><stop offset="1" stopColor="#f0245e" /></linearGradient></defs><path d="M14 0c1 3 8 5 8.500 12C23 19 18 23.500 11.500 23.500S0 19 .5 12C.6 8.500 2 6 4 4c0 2 1 2.500 2 2 2-.5 3 0 4 1 1-2 1-4 4-7z" fill="url(#ff)" /><circle cx="11.500" cy="13" r="5" fill="#8040d8" /><path d="M5 9c3-2 6-1 8 2-2 0-4 1-3 3-3 0-5-2-5-5z" fill="#ff8a2a" /></Svg></Slot>
          <Slot $w={49}><Svg w={20} h={22}><circle cx="10" cy="9.500" r="9.500" fill="#3ddc84" /><path d="M10 5 3 21M10 5l7 16M5 14q5 5 10 0" stroke="#c5d3d8" strokeWidth="2" /><circle cx="10" cy="8" r="3.500" fill="#174c5c" /><circle cx="10" cy="8" r="1.300" fill="#fff" /></Svg></Slot>
          <Slot $w={49}><Svg w={22} h={24}><path d="M1 2h18v21H1z" fill="#f4f6f0" stroke="#9aa09a" /><path d="M2 15h16v7H2z" fill="#6cc64c" /><path d="M3 1.500h14" stroke="#555" strokeDasharray="1 1" strokeWidth="2" /><path d="M5.500 7v8M8.500 7v8M10 11h5" stroke="#222" strokeWidth="1.300" /><path d="m21 2-7 14-2 2 .5-3.500L19 1z" fill="#f2a62c" stroke="#a5672a" strokeWidth=".6" /></Svg></Slot>
          <Slot $w={49} $u={40} $uc="#7c93b8"><Svg w={24} h={22}><circle cx="11" cy="11" r="10.500" fill="#fff" /><circle cx="11" cy="11" r="8" stroke="#11a0bf" strokeWidth="2.500" /><path d="M15 6q3 6-3 10l-4 2q8 2 9-5 .5-4-2-7z" fill="#5cb947" /><path d="M14 16h7v6h-7zM21 18l3-2v6l-3-2z" fill="#18b8dc" /></Svg></Slot>
          <Slot $w={49} $u={40} $uc="#7c93b8"><Eclipse s={24} /></Slot>
          <Gap $w={43.5} />
          <Slot $w={46}><Svg w={24} h={22}><circle cx="11" cy="11" r="10.500" fill="#fff" /><circle cx="11" cy="11" r="9" fill="#0c7fc4" /><path d="M7.500 8q.5-3 3.500-3t3.500 2.800Q14.500 9.500 12 11q-1 .8-1 2.200M11 15.500v2" stroke="#fff" strokeWidth="2.300" /><circle cx="18.500" cy="16.500" r="5" fill="#f0a51e" /><path d="M18.500 13v1.500M18.500 15.500v4" stroke="#fff" strokeWidth="1.700" /></Svg></Slot>
          <Gap $w={14} />
          <Slot $w={30}><Svg w={23} h={17}><defs><linearGradient id="cl" x1="0" y1="0" x2="1" y2="1"><stop offset="0" stopColor="#e8f6ff" /><stop offset="1" stopColor="#7dbcf0" /></linearGradient></defs><path d="M5 16.500c-6 0-6.500-7-1-8C4 1.500 13-2 16 4.500c7 0 8 11.500 0 12z" fill="url(#cl)" /></Svg></Slot>
          <Slot $w={37}><T $s={13} $lh={18} $ls={-0.5} $c="#d5d7da">75°F</T></Slot>
          <Gap $w={4} />
          <Slot $w={28}><Chev w={14} c="#fff" sw={1} /></Slot>
          <Slot $w={21}><Speaker /></Slot>
          <Slot $w={36}><Svg w={16}><path d="M1 11q3-5 4-1t-3 4 0-5q4-1 6 2t6 1M7 9l5-8 2 1-5 8-2.500 2zM11 9l3-2" stroke="#eee" strokeWidth="1.100" /></Svg></Slot>
          <Slot $w={31} $pb={1}><T $s={12} $ls={-0.5}>ENG</T></Slot>
          <Slot $w={69}><div><T $s={12} $lh={18} $ls={-0.5}>10:43 AM</T><T $s={12} $lh={18} $ls={-0.5}>6/12/2021</T></div></Slot>
          <Slot $w={36}><Svg w={17} h={16}><path d="M1 1h15v11h-5l-2.500 3L6 12H1z" stroke="#fff" strokeWidth="1.200" /></Svg></Slot>
          <Gap $w={10} /><EdgeLine />
        </Taskbar>

        <Hatch>
          <Svg w={229} h={24}>
            <defs><pattern id="weave" width="5" height="5" patternUnits="userSpaceOnUse"><path d="M0 0h1v1H0zM1 1h1v1H1zM2 2h1v1H2zM3 3h1v1H3zM4 4h1v1H4zM4 1h1v1H4zM3 2h1v1H3zM2 3h1v1H2zM1 4h1v1H1z" fill="#dede26" /></pattern></defs>
            <rect width="229" height="24" fill="url(#weave)" />
          </Svg>
        </Hatch>
        <SharePill>
          <T $s={11} $lh={15} $ls={-0.42}>Viewing Virendra's desktop</T>
          <ShareIcons>
            <Svg w={25} h={17}><path d="M1 2h15v9H1z" stroke="#fff" strokeWidth="2" /><path d="M4.500 7.500q4-3.500 8 0" stroke="#fff" strokeWidth="1.500" /><path d="M5.500 15h7" stroke="#fff" strokeWidth="2" /><path d="m19 1 5 5m0-5-5 5" stroke="#e34b40" strokeWidth="1.600" /></Svg>
            <Svg w={11}><circle cx="5.500" cy="5.500" r="4.300" fill="#f8402a" stroke="#fff" strokeWidth="1.500" /></Svg>
          </ShareIcons>
        </SharePill>
        <ChatBox>
          <ChatHead><T $s={14.5} $lh={20} $c="#666" $ls={-0.3}>Chat</T><Svg w={11}><path d="m1 1 9 9m0-9-9 9" stroke="#666" strokeWidth="2" /></Svg></ChatHead>
          <ChatLog>
            <Messages>{messages.map(([t, from, ls], i) => <T key={i} $s={from ? 12 : 13} $lh={17} $ls={ls || -0.2} $c={from ? '#999' : '#222'}>{t}</T>)}</Messages>
            <Bar><Chev w={9} sw={2} c="#555" /><Thumb /><Chev w={9} sw={2} c="#555" dir="down" /></Bar>
          </ChatLog>
          <SendRow><SendLabel><T $s={13} $c="#666" $ls={-0.05} $lh={18}>Send to:</T></SendLabel><Select><T $s={11.5} $c="#555" $ls={-0.1} $lh={16}>All Attendees</T><Chev w={9} c="#aaa" dir="down" /></Select></SendRow>
          <ComposeRow><Compose><Caret /></Compose><SendBtn><T $s={11.5} $lh={15}>Send</T></SendBtn></ComposeRow>
        </ChatBox>
        <Floating>
          <Svg w={52}><defs><linearGradient id="fw" x1=".3" y1="0" x2=".7" y2="1"><stop offset=".2" stopColor="#5eb0c6" /><stop offset=".8" stopColor="#0b3b52" /></linearGradient></defs>
            <circle cx="26" cy="26" r="26" fill="url(#fw)" opacity=".9" /><circle cx="26" cy="26" r="17" fill="#4d8a3c" /><path d="M37 11q5 12-4 20t-22 4Q5 22 15 13t22-2z" fill="#d2d5d6" />
          </Svg>
        </Floating>
      </Screen>
    </>
  );
}
